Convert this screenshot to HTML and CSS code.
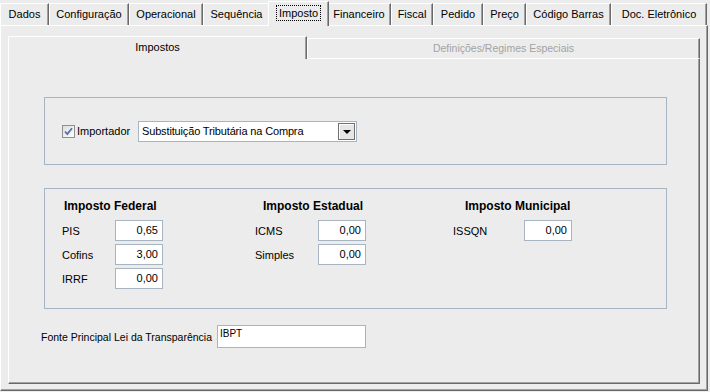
FILE: index.html
```html
<!DOCTYPE html>
<html lang="pt-BR">

<head>
  <meta charset="UTF-8">
  <title>Imposto</title>
  <link rel="stylesheet" href="styles.css">
</head>

<body>
  <!-- abas principais -->
  <div class="tabs">
    <div class="tab t-dados">Dados</div>
    <div class="tab t-config">Configuração</div>
    <div class="tab t-oper">Operacional</div>
    <div class="tab t-seq">Sequência</div>
    <div class="tab t-imp on"><span class="focus">Imposto</span></div>
    <div class="tab t-fin">Financeiro</div>
    <div class="tab t-fis">Fiscal</div>
    <div class="tab t-ped">Pedido</div>
    <div class="tab t-preco">Preço</div>
    <div class="tab t-cod">Código Barras</div>
    <div class="tab t-doc">Doc. Eletrônico</div>
  </div>

  <div class="page">
    <!-- sub abas -->
    <div class="subtabs">
      <div class="subtab on">Impostos</div>
      <div class="subtab off">Definições/Regimes Especiais</div>
    </div>

    <div class="subpage">
      <div class="group group-import">
        <span class="check">
          <svg width="11" height="11" viewBox="0 0 11 11">
            <path d="M2 5.5 L4.3 8 L9 2.2" fill="none" stroke="#5570b0" stroke-width="1.8"/>
          </svg>
        </span>
        <span class="check-label">Importador</span>
        <div class="combo">
          <span class="combo-text">Substituição Tributária na Compra</span>
          <span class="combo-btn"><span class="arrow"></span></span>
        </div>
      </div>

      <div class="group group-taxes">
        <div class="col col1">
          <h3>Imposto Federal</h3>
          <div class="row"><span class="lbl">PIS</span><span class="num">0,65</span></div>
          <div class="row"><span class="lbl">Cofins</span><span class="num">3,00</span></div>
          <div class="row"><span class="lbl">IRRF</span><span class="num">0,00</span></div>
        </div>
        <div class="col col2">
          <h3>Imposto Estadual</h3>
          <div class="row"><span class="lbl">ICMS</span><span class="num">0,00</span></div>
          <div class="row"><span class="lbl">Simples</span><span class="num">0,00</span></div>
        </div>
        <div class="col col3">
          <h3>Imposto Municipal</h3>
          <div class="row"><span class="lbl">ISSQN</span><span class="num">0,00</span></div>
        </div>
      </div>

      <div class="fonte">
        <span>Fonte Principal Lei da Transparência</span>
        <span class="fonte-input">IBPT</span>
      </div>
    </div>
  </div>
</body>

</html>
```

FILE: styles.css
```css
* {
  margin: 0;
  padding: 0;
  box-sizing: border-box;
}
body {
  width: 710px;
  height: 392px;
  overflow: hidden;
  background-color: #ececec;
  color: #000;
  font: 10.5px "Liberation Sans", Arial, sans-serif;
}

/* abas principais */
.tabs {
  display: flex;
  align-items: flex-end;
  height: 25px;
  font-size: 11px;
}
.tab {
  flex: none;
  height: 22px;
  line-height: 21px;
  text-align: center;
  border-top: 1px solid #fff;
  border-left: 1px solid #fff;
  border-right: 1px solid #696969;
  box-shadow: inset -1px 0 0 #a0a0a0;
  white-space: nowrap;
}
.t-dados { width: 49px; }
.t-config { width: 80px; }
.t-oper { width: 74px; }
.t-seq { width: 67px; }
.t-imp { width: 57px; }
.t-fin { width: 64px; }
.t-fis { width: 42px; }
.t-ped { width: 50px; }
.t-preco { width: 43px; }
.t-cod { width: 85px; }
.t-doc { width: 96px; }
.tab.on {
  position: relative;
  z-index: 1;
  width: 61px;
  height: 25px;
  line-height: 22px;
  margin: 0 -2px -1px;
  background-color: #ececec;
}
.focus {
  outline: 1px dotted #000;
  padding: 1px 2px;
}

/* painel */
.page {
  width: 708px;
  height: 366px;
  padding: 10px 7px 0 7px;
  border-top: 1px solid #fff;
  border-left: 1px solid #fff;
  border-right: 1px solid #696969;
  border-bottom: 1px solid #696969;
  box-shadow: inset -1px -1px 0 #a0a0a0;
}

/* sub abas */
.subtabs {
  display: flex;
  align-items: flex-end;
  height: 22px;
}
.subtab {
  text-align: center;
  border-top: 1px solid #fff;
  border-left: 1px solid #fff;
  border-right: 1px solid #696969;
  box-shadow: inset -1px 0 0 #a0a0a0;
}
.subtab.on {
  position: relative;
  z-index: 1;
  width: 299px;
  height: 23px;
  line-height: 20px;
  margin-bottom: -1px;
  background-color: #ececec;
  font-size: 11px;
}
.subtab.off {
  flex: 1;
  height: 20px;
  line-height: 19px;
  color: #a3a3a3;
}

.subpage {
  height: 326px;
  padding: 38px 0 0 35px;
  border-top: 1px solid #fff;
  border-left: 1px solid #fff;
  border-right: 1px solid #696969;
  border-bottom: 1px solid #696969;
  box-shadow: inset -1px -1px 0 #a0a0a0;
}

/* caixas */
.group {
  width: 623px;
  border: 1px solid #a7b5c2;
}
.group-import {
  display: flex;
  align-items: center;
  height: 68px;
  padding-left: 17px;
}
.check {
  display: flex;
  align-items: center;
  justify-content: center;
  width: 13px;
  height: 13px;
  border: 1px solid #8e8f8f;
  background: linear-gradient(135deg, #dcdcdc, #fff);
}
.check-label {
  width: 61px;
  margin-left: 2px;
  font-size: 11px;
}
.combo {
  display: flex;
  align-items: center;
  width: 219px;
  height: 21px;
  padding: 0 1px 0 3px;
  border: 1px solid #a7b5c2;
  background-color: #fff;
  font-size: 11px;
}
.combo-text {
  flex: 1;
  white-space: nowrap;
  letter-spacing: -0.15px;
}
.combo-btn {
  display: flex;
  align-items: center;
  justify-content: center;
  width: 17px;
  height: 17px;
  border: 1px solid #707070;
  box-shadow: inset 1px 1px 0 #fff;
  background-color: #e6e6e6;
}
.arrow {
  border-top: 4px solid #000;
  border-left: 4px solid transparent;
  border-right: 4px solid transparent;
  margin-top: 1px;
}

.group-taxes {
  display: grid;
  grid-template-columns: 193px 198px 1fr;
  height: 121px;
  margin-top: 23px;
  padding: 9px 0 0 17px;
  font-size: 11px;
}
.col h3 {
  height: 16px;
  line-height: 16px;
  margin-bottom: 6px;
  font-size: 12px;
  font-weight: bold;
}
.col1 h3 { padding-left: 2px; }
.col2 h3 { padding-left: 8px; }
.col3 h3 { padding-left: 12px; }
.row {
  display: flex;
  align-items: center;
  height: 21px;
  margin-bottom: 3px;
}
.col1 .lbl { width: 53px; }
.col2 .lbl { width: 63px; }
.col3 .lbl { width: 71px; }
.num {
  width: 48px;
  height: 21px;
  line-height: 19px;
  padding-right: 4px;
  text-align: right;
  border: 1px solid #a7b5c2;
  background-color: #fff;
}

/* rodape */
.fonte {
  display: flex;
  align-items: center;
  margin: 16px 0 0 -3px;
}
.fonte span:first-child {
  width: 176px;
  white-space: nowrap;
}
.fonte-input {
  width: 149px;
  height: 23px;
  padding: 1px 2px;
  line-height: 13px;
  font-size: 10px;
  border: 1px solid #a7b5c2;
  background-color: #fff;
}
```
